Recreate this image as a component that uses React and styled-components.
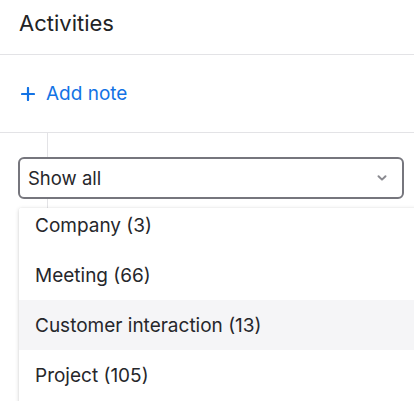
import React from "react";
import styled, { createGlobalStyle } from "styled-components";

const Global = createGlobalStyle`
  html, body { margin: 0; padding: 0; background: #fff; }
  body { font-family: Inter, "Noto Sans", sans-serif; overflow: hidden; }
`;

const Page = styled.div`
  width: 414px;
  height: 401px;
  position: relative;
  overflow: hidden;
  background: #fff;
`;

const Header = styled.div`
  height: 55px;
  padding: 0 19px;
  display: flex;
  align-items: center;
  border-bottom: 1px solid #e3e3e6;
  box-sizing: border-box;
`;

const Title = styled.h2`
  margin: 0;
  font-size: 22px;
  font-weight: 400;
  color: #222325;
  margin-top: -9px;
`;

const AddRow = styled.div`
  height: 78px;
  padding: 0 21px;
  display: flex;
  align-items: center;
  border-bottom: 1px solid #e3e3e6;
  box-sizing: border-box;
`;

const AddButton = styled.button`
  display: flex;
  align-items: center;
  gap: 11px;
  border: 0;
  background: none;
  padding: 0;
  font-family: inherit;
  font-size: 19px;
  font-weight: 400;
  color: #1373e5;
  cursor: pointer;
`;

const Timeline = styled.div`
  position: relative;
  padding: 24px 10px 0 18px;
  height: 268px;
  &::before {
    content: "";
    position: absolute;
    left: 47px;
    top: 0;
    bottom: 0;
    width: 1px;
    background: #e3e3e6;
  }
`;

const Select = styled.div`
  position: relative;
  height: 42px;
  width: 386px;
  box-sizing: border-box;
  border: 2px solid #76767d;
  border-radius: 6px;
  background: #fff;
  display: flex;
  align-items: center;
  justify-content: space-between;
  padding: 0 14px 0 8px;
  font-size: 18.5px;
  color: #26272b;
`;

const Menu = styled.div`
  position: absolute;
  left: 19px;
  top: 75px;
  width: 420px;
  height: 200px;
  background: #fff;
  overflow: hidden;
  box-shadow: 0 1px 4px rgba(0, 0, 0, 0.18), 0 0 1px rgba(0, 0, 0, 0.12);
  border-radius: 2px;
`;

const List = styled.ul`
  list-style: none;
  margin: -8px 0 0;
  padding: 0;
`;

const Item = styled.li`
  height: 50px;
  display: flex;
  align-items: center;
  padding-left: 16px;
  font-size: 19px;
  color: #26272b;
  background: ${(p) => (p.$active ? "#f5f5f7" : "#fff")};
`;

const items = [
  "Company (3)",
  "Meeting (66)",
  "Customer interaction (13)",
  "Project (105)",
];

export default function App() {
  return (
    <Page>
      <Global />
      <Header>
        <Title>Activities</Title>
      </Header>
      <AddRow>
        <AddButton>
          <svg width="14" height="14" viewBox="0 0 14 14">
            <path d="M7 1v12M1 7h12" stroke="#1373e5" strokeWidth="2.2" strokeLinecap="round" />
          </svg>
          Add note
        </AddButton>
      </AddRow>
      <Timeline>
        <Select>
          <span>Show all</span>
          <svg width="12" height="8" viewBox="0 0 12 8">
            <path d="M2.5 2.2L6 5.6L9.5 2.2" fill="none" stroke="#8a8a90" strokeWidth="2" strokeLinecap="round" strokeLinejoin="round" />
          </svg>
        </Select>
        <Menu>
          <List>
            {items.map((t, i) => (
              <Item key={t} $active={i === 2}>{t}</Item>
            ))}
          </List>
        </Menu>
      </Timeline>
    </Page>
  );
}
